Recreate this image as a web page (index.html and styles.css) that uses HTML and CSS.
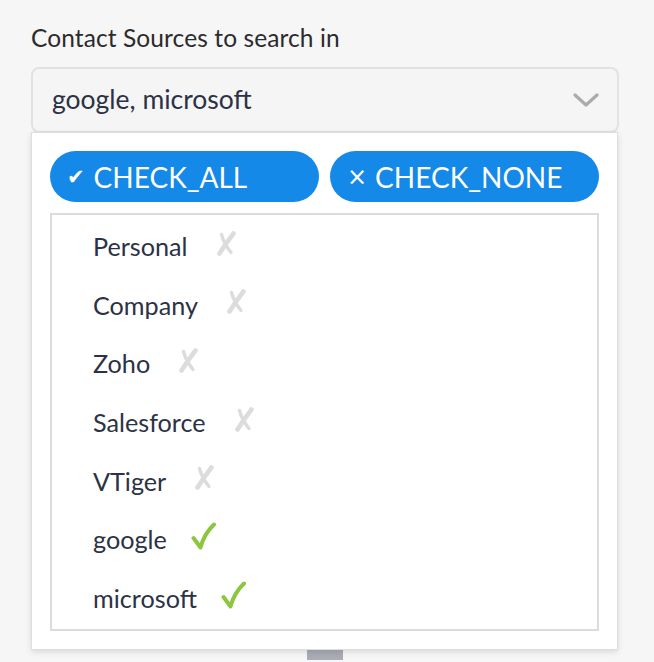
FILE: index.html
```html
<!DOCTYPE html>
<html>
<head>
<meta charset="utf-8">
<link rel="stylesheet" href="styles.css">
</head>
<body>
<div class="field">
  <div class="label">Contact Sources to search in</div>
  <div class="select">
    <span class="value">google, microsoft</span>
    <svg class="chev" width="26" height="16" viewBox="0 0 26 16"><path d="M2 3 L13 13 L24 3" fill="none" stroke="#ababab" stroke-width="3.2" stroke-linecap="round" stroke-linejoin="round"/></svg>
  </div>
  <div class="panel">
    <div class="actions">
      <button class="pill"><span class="pi">✔</span>CHECK_ALL</button>
      <button class="pill"><span class="pi px">×</span>CHECK_NONE</button>
    </div>
    <ul class="list">
      <li><span>Personal</span><svg class="mark off" width="20" height="25" viewBox="0 0 20 25"><path d="M17.5 2.5 Q10 12 3.5 22.5" /><path class="thin" d="M5.5 3.5 Q8 13 15 21.5" /></svg></li>
      <li><span>Company</span><svg class="mark off" width="20" height="25" viewBox="0 0 20 25"><path d="M17.5 2.5 Q10 12 3.5 22.5" /><path class="thin" d="M5.5 3.5 Q8 13 15 21.5" /></svg></li>
      <li><span>Zoho</span><svg class="mark off" width="20" height="25" viewBox="0 0 20 25"><path d="M17.5 2.5 Q10 12 3.5 22.5" /><path class="thin" d="M5.5 3.5 Q8 13 15 21.5" /></svg></li>
      <li><span>Salesforce</span><svg class="mark off" width="20" height="25" viewBox="0 0 20 25"><path d="M17.5 2.5 Q10 12 3.5 22.5" /><path class="thin" d="M5.5 3.5 Q8 13 15 21.5" /></svg></li>
      <li><span>VTiger</span><svg class="mark off" width="20" height="25" viewBox="0 0 20 25"><path d="M17.5 2.5 Q10 12 3.5 22.5" /><path class="thin" d="M5.5 3.5 Q8 13 15 21.5" /></svg></li>
      <li><span>google</span><svg class="mark on" width="25" height="28" viewBox="0 0 25 28"><path d="M2.5 16 L9.5 25.5 Q13 12 23 2.5" /></svg></li>
      <li><span>microsoft</span><svg class="mark on" width="25" height="28" viewBox="0 0 25 28"><path d="M2.5 16 L9.5 25.5 Q13 12 23 2.5" /></svg></li>
    </ul>
  </div>
  <div class="stub"></div>
</div>
</body>
</html>
```

FILE: styles.css
```css
html, body {
  margin: 0;
  padding: 0;
  background: #f6f6f6;
  font-family: Lato, "Open Sans", sans-serif;
  overflow: hidden;
}
.field {
  width: 588px;
  padding: 22px 0 0 31px;
}
.label {
  font-size: 24.5px;
  letter-spacing: 0.1px;
  line-height: 32px;
  color: #2b2b2b;
  margin-bottom: 13px;
}
.select {
  box-sizing: border-box;
  height: 66px;
  border: 2px solid #e2e2e2;
  border-radius: 8px;
  background: #f5f5f5;
  display: flex;
  align-items: center;
  justify-content: space-between;
  padding: 0 18px 0 19px;
}
.value {
  font-size: 26.5px;
  color: #2c3245;
  position: relative;
  top: -1px;
}
.chev { display: block; }
.panel {
  box-sizing: border-box;
  width: 587px;
  margin-top: -1px;
  background: #fff;
  border: 1px solid #dedede;
  box-shadow: 0 2px 6px rgba(0,0,0,0.12);
  padding: 18px;
  position: relative;
  z-index: 1;
}
.actions {
  display: flex;
  gap: 11px;
  margin-bottom: 11px;
}
.pill {
  flex: 1;
  height: 51px;
  border: none;
  border-radius: 26px;
  background: #1589e8;
  color: #fff;
  font-family: Lato, sans-serif;
  font-size: 28px;
  text-align: left;
  padding: 0 0 0 17px;
  display: flex;
  align-items: center;
}
.pi {
  font-family: "DejaVu Sans", sans-serif;
  font-size: 21px;
  margin-right: 9px;
}
.px { font-size: 24px; margin-right: 8px; }
.list {
  list-style: none;
  margin: 0;
  padding: 2px 0 2px 41px;
  border: 2px solid #dcdcdc;
}
.list li {
  height: 58.6px;
  display: flex;
  align-items: center;
  font-size: 25.2px;
  color: #2c3245;
}
.mark {
  display: block;
  fill: none;
  stroke-linecap: round;
  stroke-linejoin: round;
  position: relative;
}
.off {
  stroke: #dcdcdc;
  stroke-width: 4.5;
  margin-left: 28px;
  top: -3px;
}
.off .thin { stroke-width: 3.4; }
.on {
  stroke: #8cc63e;
  stroke-width: 4;
  margin-left: 24px;
  top: -3px;
}
.stub {
  width: 36px;
  height: 12px;
  background: #a9abb5;
  margin: -2px auto 0 276px;
}
```
